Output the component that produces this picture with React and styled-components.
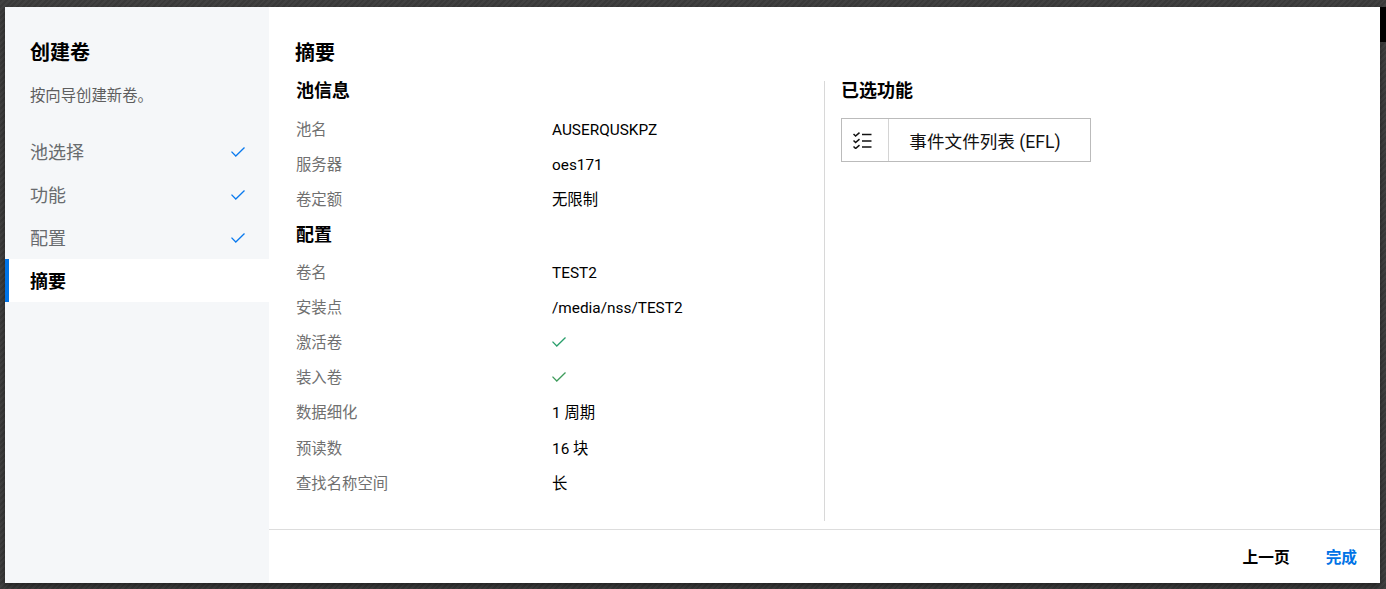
import React from "react";
import styled, {createGlobalStyle} from "styled-components";

const GlobalStyle = createGlobalStyle`
	html, body {
		margin: 0;
		padding: 0;
		height: 100%;
		overflow: hidden;
	}
	body {
		font-family: Roboto, "Noto Sans CJK SC", sans-serif;
		color: #000;
	}
`;

const poolRows = [
	{label: "池名", value: "AUSERQUSKPZ"},
	{label: "服务器", value: "oes171"},
	{label: "卷定额", value: "无限制"},
];

const configRows = [
	{label: "卷名", value: "TEST2"},
	{label: "安装点", value: "/media/nss/TEST2"},
	{label: "激活卷", check: "#2a9f6c"},
	{label: "装入卷", check: "#3f9c5c"},
	{label: "数据细化", value: "1 周期"},
	{label: "预读数", value: "16 块"},
	{label: "查找名称空间", value: "长"},
];

const steps = ["池选择", "功能", "配置"];

function CheckIcon({color}) {
	return (
		<svg width="14" height="10" viewBox="0 0 14 10" fill="none">
			<path d="M0.5 4.6 L4.8 9 L13.5 0.5" stroke={color} strokeWidth="1.3" />
		</svg>
	);
}

function ListIcon() {
	return (
		<svg width="19" height="17" viewBox="0 0 19 17" fill="none" stroke="#111" strokeWidth="1.5">
			<path d="M0.5 2 L2.6 4 L6.5 0.6" />
			<path d="M0.5 8.5 L2.6 10.5 L6.5 7.1" />
			<path d="M0.5 14.5 L2.6 16.5 L6.5 13.1" />
			<path d="M9 2.5 H18.5" />
			<path d="M9 9 H18.5" />
			<path d="M9 15 H18.5" />
		</svg>
	);
}

function InfoTable({rows, $first}) {
	return (
		<Table $first={$first}>
			{rows.map((row) => (
				<Row key={row.label}>
					<Label>{row.label}</Label>
					<Value $check={Boolean(row.check)}>
						{row.check ? <CheckIcon color={row.check} /> : row.value}
					</Value>
				</Row>
			))}
		</Table>
	);
}

export default function App() {
	return (
		<Page>
			<GlobalStyle />
			<ScrollThumb />
			<Modal>
				<Sidebar>
					<WizardTitle>创建卷</WizardTitle>
					<WizardHint>按向导创建新卷。</WizardHint>
					<Steps>
						{steps.map((step) => (
							<Step key={step}>
								<StepName>{step}</StepName>
								<CheckIcon color="#0a7aee" />
							</Step>
						))}
						<Step $active>
							<StepName>摘要</StepName>
						</Step>
					</Steps>
				</Sidebar>
				<Main>
					<Content>
						<PageTitle>摘要</PageTitle>
						<Columns>
							<LeftColumn>
								<SectionTitle>池信息</SectionTitle>
								<InfoTable rows={poolRows} $first />
								<SectionTitle>配置</SectionTitle>
								<InfoTable rows={configRows} />
							</LeftColumn>
							<RightColumn>
								<SectionTitle>已选功能</SectionTitle>
								<FeatureCard>
									<FeatureIcon>
										<ListIcon />
									</FeatureIcon>
									<FeatureName>事件文件列表 (EFL)</FeatureName>
								</FeatureCard>
							</RightColumn>
						</Columns>
					</Content>
					<Footer>
						<FooterButton>上一页</FooterButton>
						<FooterButton $primary>完成</FooterButton>
					</Footer>
				</Main>
			</Modal>
		</Page>
	);
}

const Page = styled.div`
	position: relative;
	box-sizing: border-box;
	height: 589px;
	padding: 7px 6px 6px 5px;
	display: flex;
	background-color: #3c3c3c;
	background-image: repeating-linear-gradient(
		135deg,
		#3a3a3a 0,
		#3a3a3a 2px,
		#424242 2px,
		#424242 4px
	);
`;

const ScrollThumb = styled.div`
	position: absolute;
	top: 7px;
	right: 0;
	width: 6px;
	height: 35px;
	background: #000;
`;

const Modal = styled.div`
	flex: 1;
	display: flex;
	background: #fff;
	box-shadow: 0 3px 6px rgba(0, 0, 0, 0.45);
`;

const Sidebar = styled.aside`
	width: 264px;
	flex-shrink: 0;
	background: #f5f7f9;
	padding-top: 32px;
`;

const WizardTitle = styled.div`
	padding-left: 25px;
	font-size: 20px;
	line-height: 28px;
	font-weight: 700;
`;

const WizardHint = styled.div`
	margin-top: 17px;
	padding-left: 25px;
	font-size: 15.36px;
	line-height: 24px;
	color: #5e5e5e;
`;

const Steps = styled.div`
	margin-top: 22px;
`;

const Step = styled.div`
	box-sizing: border-box;
	height: 43px;
	display: flex;
	align-items: center;
	justify-content: space-between;
	padding: 0 24px 0 ${(props) => (props.$active ? "21px" : "25px")};
	font-size: 18px;
	color: ${(props) => (props.$active ? "#000" : "#686b6e")};
	font-weight: ${(props) => (props.$active ? 700 : 400)};
	background: ${(props) => (props.$active ? "#fff" : "transparent")};
	border-left: ${(props) => (props.$active ? "4px solid #0073e6" : "0")};
`;

const StepName = styled.span`
	line-height: 24px;
	margin-top: 3px;
`;

const Main = styled.main`
	flex: 1;
	min-width: 0;
	display: flex;
	flex-direction: column;
`;

const Content = styled.div`
	flex: 1;
	min-height: 0;
	padding: 32px 0 0 26px;
	border-bottom: 1px solid #dddddd;
	display: flex;
	flex-direction: column;
`;

const PageTitle = styled.div`
	font-size: 20px;
	line-height: 28px;
	font-weight: 700;
`;

const Columns = styled.div`
	display: flex;
	margin-top: 14px;
	height: 440px;
`;

const LeftColumn = styled.div`
	width: 530px;
	padding-left: 1px;
	box-sizing: border-box;
	border-right: 1px solid #d8d8d8;
`;

const RightColumn = styled.div`
	padding-left: 16px;
`;

const SectionTitle = styled.div`
	font-size: 18px;
	line-height: 20px;
	font-weight: 700;
`;

const Table = styled.div`
	padding: ${(props) => (props.$first ? "11px 0 7px" : "10.5px 0 0")};
`;

const Row = styled.div`
	display: grid;
	grid-template-columns: 256px 1fr;
	align-items: center;
	height: 35.2px;
	font-size: 15.36px;
	line-height: 24px;
`;

const Label = styled.div`
	color: #707070;
`;

const Value = styled.div`
	color: #000;
	display: flex;
	align-items: center;
	height: 24px;
	padding-bottom: ${(props) => (props.$check ? "3px" : "0")};
	box-sizing: border-box;
`;

const FeatureCard = styled.div`
	margin-top: 17px;
	box-sizing: border-box;
	width: 250px;
	height: 44px;
	display: flex;
	border: 1px solid #bbbbbb;
`;

const FeatureIcon = styled.div`
	box-sizing: border-box;
	width: 47px;
	padding-left: 11px;
	display: flex;
	align-items: center;
	border-right: 1px solid #d4d4d4;
`;

const FeatureName = styled.div`
	flex: 1;
	display: flex;
	align-items: center;
	justify-content: center;
	padding-right: 9px;
	font-size: 17.6px;
	color: #111;
`;

const Footer = styled.footer`
	box-sizing: border-box;
	height: 53px;
	display: flex;
	align-items: center;
	justify-content: flex-end;
	gap: 36px;
	padding-right: 23px;
`;

const FooterButton = styled.div`
	font-size: 15.7px;
	font-weight: 700;
	color: ${(props) => (props.$primary ? "#0073e6" : "#000")};
`;
